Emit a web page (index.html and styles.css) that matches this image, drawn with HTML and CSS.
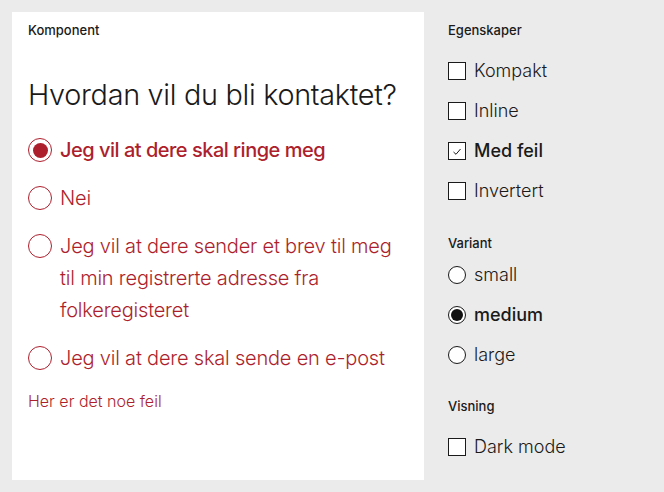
FILE: index.html
```html
<!DOCTYPE html>
<html lang="no">
<head>
<meta charset="utf-8">
<link rel="stylesheet" href="styles.css">
</head>
<body>
<div class="page">
  <section class="preview">
    <div class="section-label">Komponent</div>
    <fieldset class="group">
      <legend class="question">Hvordan vil du bli kontaktet?</legend>
      <label class="radio-row">
        <span class="radio radio--checked"></span>
        <span class="radio-text radio-text--bold">Jeg vil at dere skal ringe meg</span>
      </label>
      <label class="radio-row">
        <span class="radio"></span>
        <span class="radio-text">Nei</span>
      </label>
      <label class="radio-row">
        <span class="radio"></span>
        <span class="radio-text">Jeg vil at dere sender et brev til meg til min registrerte adresse fra folkeregisteret</span>
      </label>
      <label class="radio-row">
        <span class="radio"></span>
        <span class="radio-text">Jeg vil at dere skal sende en e-post</span>
      </label>
      <div class="error">Her er det noe feil</div>
    </fieldset>
  </section>
  <aside class="controls">
    <div class="section-label">Egenskaper</div>
    <div class="opt-list">
      <div class="opt"><span class="cb"></span><span class="opt-text">Kompakt</span></div>
      <div class="opt"><span class="cb"></span><span class="opt-text">Inline</span></div>
      <div class="opt"><span class="cb cb--checked"><svg viewBox="0 0 18 18" width="18" height="18"><path d="M5.5 10 L8 12.3 L12.5 7" fill="none" stroke="#1a1a1a" stroke-width="1"/></svg></span><span class="opt-text opt-text--bold">Med feil</span></div>
      <div class="opt"><span class="cb"></span><span class="opt-text">Invertert</span></div>
    </div>
    <div class="section-label section-label--spaced section-label--variant">Variant</div>
    <div class="opt-list opt-list--tight">
      <div class="opt"><span class="rb"></span><span class="opt-text">small</span></div>
      <div class="opt"><span class="rb rb--checked"></span><span class="opt-text opt-text--bold">medium</span></div>
      <div class="opt"><span class="rb"></span><span class="opt-text">large</span></div>
    </div>
    <div class="section-label section-label--spaced">Visning</div>
    <div class="opt-list">
      <div class="opt"><span class="cb"></span><span class="opt-text">Dark mode</span></div>
    </div>
  </aside>
</div>
</body>
</html>
```
FILE: styles.css
```css
* { box-sizing: border-box; }
html, body {
  margin: 0;
  padding: 0;
  background: #ebebeb;
  font-family: Inter, "Noto Sans", sans-serif;
  color: #1a1a1a;
}
.page {
  display: flex;
  padding: 12px;
  height: 492px;
}
.preview {
  background: #fff;
  width: 412px;
  height: 468px;
  padding: 10px 16px 16px 16px;
}
.section-label {
  font-size: 13px;
  font-weight: 500;
  line-height: 16px;
  height: 16px;
}
.section-label--spaced {
  margin-top: 29px;
}
.section-label--variant {
  margin-top: 30px;
}
.group {
  border: 0;
  margin: 0;
  padding: 0;
  display: flex;
  flex-direction: column;
  gap: 16px;
}
.question {
  padding: 0;
  margin-top: 39px;
  margin-bottom: 5px;
  font-size: 28.8px;
  font-weight: 300;
  line-height: 36px;
  letter-spacing: -0.3px;
  float: left;
  width: 100%;
}
.radio-row {
  display: flex;
  align-items: flex-start;
  gap: 8px;
  color: #ad1f2d;
}
.radio {
  flex: none;
  width: 24px;
  height: 24px;
  margin-top: 4px;
  border: 1.5px solid #ad1f2d;
  border-radius: 50%;
  display: flex;
  align-items: center;
  justify-content: center;
}
.radio--checked::after {
  content: "";
  width: 15px;
  height: 15px;
  border-radius: 50%;
  background: #ad1f2d;
}
.radio-text {
  font-size: 20px;
  line-height: 32px;
  font-weight: 300;
  letter-spacing: -0.2px;
}
.radio-text--bold {
  font-weight: 500;
  letter-spacing: -0.5px;
}
.error {
  color: #ad1f2d;
  font-size: 16px;
  line-height: 20px;
  font-weight: 300;
  margin-top: 1px;
}
.controls {
  padding: 10px 0 0 24px;
  display: flex;
  flex-direction: column;
}
.opt-list {
  display: flex;
  flex-direction: column;
  gap: 12px;
  margin-top: 19px;
}
.opt-list--tight {
  margin-top: 10px;
}
.opt {
  display: flex;
  align-items: center;
  gap: 8px;
  height: 28px;
}
.cb {
  flex: none;
  width: 18px;
  height: 18px;
  border: 1px solid #1a1a1a;
  background: #fff;
  display: flex;
}
.cb svg { margin: -1px; }
.rb {
  flex: none;
  width: 18px;
  height: 18px;
  border: 1px solid #1a1a1a;
  border-radius: 50%;
  background: #fff;
  display: flex;
  align-items: center;
  justify-content: center;
}
.rb--checked::after {
  content: "";
  width: 12px;
  height: 12px;
  border-radius: 50%;
  background: #111;
}
.opt-text {
  font-size: 18px;
  font-weight: 300;
  line-height: 28px;
}
.opt-text--bold {
  font-weight: 500;
}
```
